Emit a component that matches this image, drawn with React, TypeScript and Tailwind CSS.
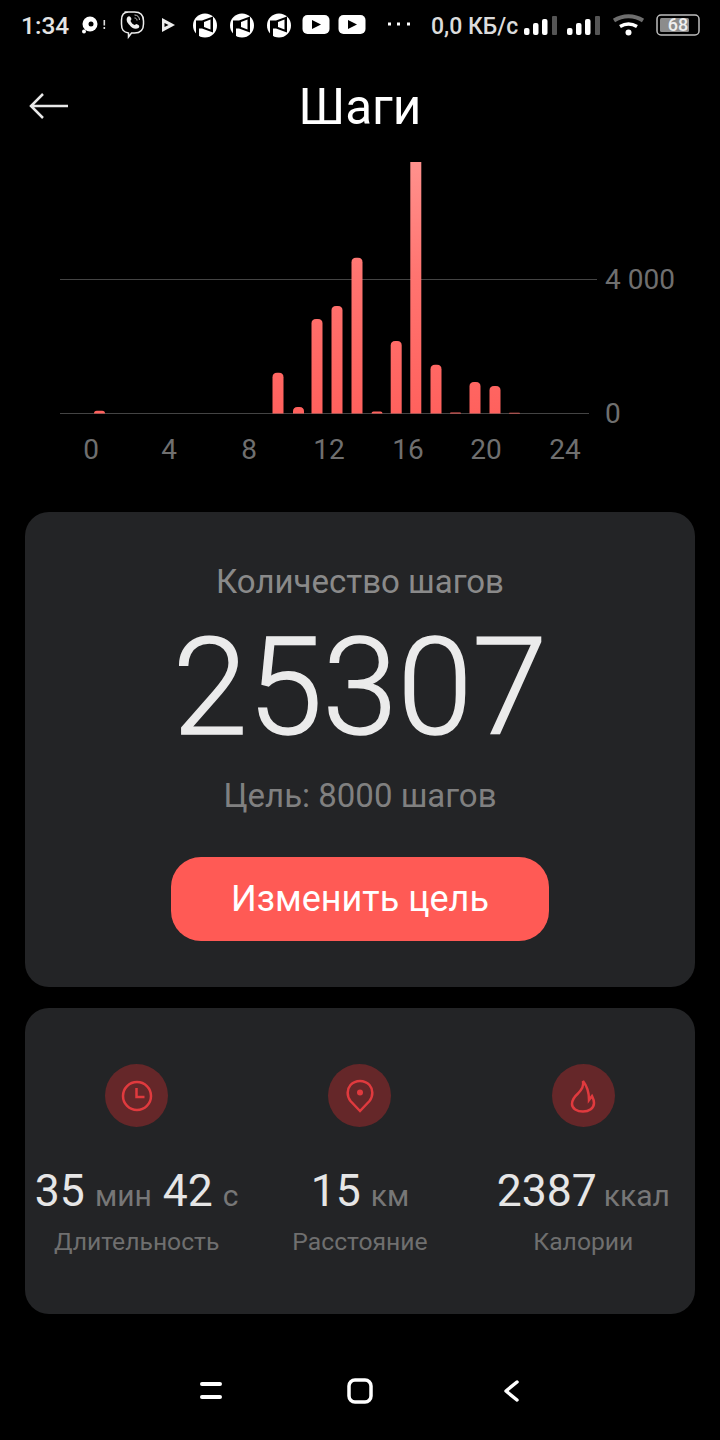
const bars: [number, number][] = [
  [94, 410.7], [272.5, 372.7], [293, 407], [311.5, 319], [331.5, 306], [351.5, 257.7],
  [371.5, 411.5], [390.7, 341], [410.3, 162], [430.5, 364.7], [450, 412.6], [469.5, 382], [489.5, 386], [509, 412.8],
];
const xLabels: [string, number][] = [["0", 91], ["4", 169], ["8", 249], ["12", 329], ["16", 408], ["20", 486], ["24", 565]];

function StatusBar() {
  return (
    <div className="flex h-[52px] items-center pl-[21px] text-[24.500px] font-medium text-[#e4e4e4]">
      <span className="w-[50px] leading-none">1:34</span>
      <svg width="340" height="40" viewBox="0 6 340 40" className="ml-[1px] shrink-0">
        <circle cx="18" cy="24" r="7.500" fill="#fff" /><circle cx="19" cy="24" r="2.500" fill="#000" /><circle cx="12" cy="31.500" r="2" fill="#fff" />
        <rect x="31.500" y="20" width="1.600" height="5.500" fill="#ddd" /><rect x="31.500" y="27" width="1.600" height="2" fill="#ddd" />
        <g transform="translate(-6.500 0)">
          <path d="M59 12h10c6 0 9 3 9 9v3c0 6-3 9-9 9h-3l-3 4v-4c-5-1-7-3-7-9v-4c0-5 2-8 7-8Z" fill="none" stroke="#eee" strokeWidth="1.500" />
          <path d="M62 17c1-1 2-1 3 0l1 2-1 2c1 2 2 3 4 4l2-1 2 1c1 1 1 2 0 3-3 2-7 0-9-3-2-2-4-5-2-8Z" fill="#eee" />
          <path d="M69 15c3 0 5 2 5 5M69 18c1.500 0 2.500 1 2.500 2.500" fill="none" stroke="#ccc" strokeWidth="1" />
        </g>
        <path d="M90 18l13 7-13 7Z" fill="#eee" />
        <path d="M92.500 23l4 2-4 2Z" fill="#000" />
        {[133, 170, 207].map((x) => (
          <g key={x}>
            <circle cx={x} cy="25.500" r="12" fill="#fff" />
            <path d={`M${x - 9} 20.500h6l11-4v16l-11-4h-3v9h-3Z`} fill="#000" />
            <path d={`M${x - 1} 22l6.500-2.500v10l-6.500-2.500Z`} fill="#fff" />
          </g>
        ))}
        {[244, 280].map((x) => (
          <g key={x}>
            <rect x={x - 13.500} y="15" width="27" height="19" rx="5" fill="#fff" />
            <path d={`M${x - 4} 20l9 4.500-9 4.500Z`} fill="#000" />
          </g>
        ))}
        {[316, 325, 335].map((x) => <rect key={x} x={x} y="22.500" width="3" height="3" fill="#fff" />)}
      </svg>
      <span className="ml-[19px] w-[90px] whitespace-nowrap text-[23px] leading-none text-[#dcdcdc]">0,0 КБ/с</span>
      <svg width="199" height="40" viewBox="0 6 199 40" className="shrink-0">
        {[3, 46].map((x, i) => (
          <g key={i}>
            <rect x={x} y="28" width="5.500" height="7" rx="2" fill="#fff" />
            <rect x={x + 9} y="23" width="5.500" height="12" rx="2" fill="#fff" />
            <rect x={x + 18} y="19" width="5.500" height="16" rx="2" fill="#fff" />
            <rect x={x + 28} y="16" width="5" height="19" rx="1" fill="#555" />
          </g>
        ))}
        <path d="M93 20.500a27 27 0 0 1 29 0" fill="none" stroke="#6e6e6e" strokeWidth="4" />
        <path d="M99 26.500a17 17 0 0 1 17 0" fill="none" stroke="#fff" strokeWidth="3.500" />
        <circle cx="107.500" cy="32.500" r="3" fill="#fff" />
        <rect x="136" y="15" width="42" height="20" rx="4" fill="none" stroke="#bdbdbd" strokeWidth="1.500" />
        <rect x="139" y="18" width="29" height="14" rx="1.500" fill="#8c8c8c" />
        <text x="157" y="31" textAnchor="middle" fontSize="18" fontWeight="500" fill="#eee" fontFamily="Roboto, sans-serif">68</text>
      </svg>
    </div>
  );
}

function Chart() {
  return (
    <svg width="720" height="320" viewBox="0 150 720 320" className="block" fontFamily="Roboto, sans-serif">
      <defs>
        <linearGradient id="bar" gradientUnits="userSpaceOnUse" x1="0" y1="162" x2="0" y2="414">
          <stop offset="0" stopColor="#ff918d" />
          <stop offset="0.45" stopColor="#ff7470" />
          <stop offset="1" stopColor="#ff615d" />
        </linearGradient>
      </defs>
      <rect x="60" y="279" width="537" height="1" fill="#444444" />
      <rect x="60" y="413" width="529" height="1" fill="#444444" />
      {bars.map(([x, top], i) => {
        const h = 413.5 - top;
        const r = i === 8 ? 0 : Math.min(4.5, h);
        return (
          <path
            key={x}
            d={`M${x} 413.5V${top + r}Q${x} ${top} ${x + r} ${top}H${x + 11 - r}Q${x + 11} ${top} ${x + 11} ${top + r}V413.5Z`}
            fill="url(#bar)"
          />
        );
      })}
      {xLabels.map(([t, x]) => (
        <text key={t} x={x} y="459" textAnchor="middle" fontSize="28" fill="#6f6f6f">{t}</text>
      ))}
      <text x="605" y="289" fontSize="28" fill="#6f6f6f">4 000</text>
      <text x="605" y="423" fontSize="28" fill="#6f6f6f">0</text>
    </svg>
  );
}

function Stat({ icon, children, label }: { icon: React.ReactNode; children: React.ReactNode; label: string }) {
  return (
    <div className="flex flex-col items-center">
      <div className="flex h-[63px] w-[63px] items-center justify-center rounded-full bg-[#652729]">{icon}</div>
      <div className="mt-[38px] flex h-[52px] items-baseline justify-center whitespace-nowrap text-[#e6e6e6]">{children}</div>
      <div className="mt-[8px] text-[24.700px] leading-[34px] text-[#6f6f6f]">{label}</div>
    </div>
  );
}
const Num = ({ c }: { c: string }) => <span className="text-[44.500px] leading-[52px]">{c}</span>;
const Unit = ({ c }: { c: string }) => <span className="ml-[10px] text-[30px] text-[#777777]">{c}</span>;

export default function App() {
  return (
    <div className="flex h-[1440px] w-[720px] flex-col overflow-hidden bg-black font-['Roboto',sans-serif]">
      <StatusBar />
      <header className="relative flex h-[98px] shrink-0 items-center justify-center">
        <svg width="40" height="30" viewBox="0 0 40 30" className="absolute left-[29px] top-[39px]">
          <path d="M39 15H2M14 3 2 15l12 12" fill="none" stroke="#e8e8e8" strokeWidth="2.500" />
        </svg>
        <h1 className="mt-[14px] text-[49.500px] font-normal leading-none text-white">Шаги</h1>
      </header>
      <Chart />
      <section className="mx-[25px] mt-[42px] flex h-[475px] flex-col items-center rounded-[24px] bg-[#232426] pt-[51px]">
        <div className="text-[33px] leading-[38px] text-[#8a8a8a]">Количество шагов</div>
        <div className="mt-[22px] text-[135px] font-light leading-[130px] text-[#ebebeb] [-webkit-text-stroke:1.500px_#ebebeb]">25307</div>
        <div className="mt-[23px] text-[33px] leading-[40px] text-[#808080]">Цель: 8000 шагов</div>
        <button className="mt-[41px] h-[84px] w-[378px] rounded-[30px] bg-[#ff5a55] text-[36px] text-white">Изменить цель</button>
      </section>
      <section className="mx-[25px] mt-[21px] grid h-[306px] grid-cols-3 rounded-[24px] bg-[#232426] pt-[56px]">
        <Stat
          label="Длительность"
          icon={
            <svg width="32" height="32" viewBox="0 0 32 32" fill="none" stroke="#e03a3e" strokeWidth="2.500">
              <circle cx="16" cy="16" r="14" />
              <path d="M15.500 8v9h8" />
            </svg>
          }
        >
          <Num c="35" /><Unit c="мин" /><span className="ml-[11px]"><Num c="42" /></span><Unit c="с" />
        </Stat>
        <Stat
          label="Расстояние"
          icon={
            <svg width="28" height="34" viewBox="0 0 28 34" fill="none" stroke="#e03a3e" strokeWidth="2.500">
              <path d="M14 32 4.500 22C0.500 17 1 10 4.500 6 9.500 0.500 18.500 0.500 23.500 6 27 10 27.500 17 23.500 22Z" />
              <circle cx="14" cy="13.500" r="3" fill="#e03a3e" stroke="none" />
            </svg>
          }
        >
          <Num c="15" /><Unit c="км" />
        </Stat>
        <Stat
          label="Калории"
          icon={
            <svg width="26" height="34" viewBox="0 0 26 34" fill="none" stroke="#e03a3e" strokeWidth="2.500">
              <path d="M13 2c1 5-1 8-5 12.500C4 18 2 21 2 25c0 4.500 5 7.500 11 7.500S24 29 24 24c0-3-1-5-2-7l-3 4c0-8-2-14-6-19Z" />
            </svg>
          }
        >
          <Num c="2387" /><span className="ml-[-3px]"><Unit c="ккал" /></span>
        </Stat>
      </section>
      <nav className="mt-[55px] flex items-center">
        <svg width="720" height="44" viewBox="0 1368 720 44" className="block">
          <g fill="none" stroke="#fff" strokeLinecap="round">
            <path d="M202 1383h18M202 1396h18" strokeWidth="4" />
            <rect x="349" y="1379" width="22" height="22" rx="6" strokeWidth="3.500" />
            <path d="M517 1381l-11 9 11 9" strokeWidth="3.500" strokeLinejoin="round" />
          </g>
        </svg>
      </nav>
    </div>
  );
}
